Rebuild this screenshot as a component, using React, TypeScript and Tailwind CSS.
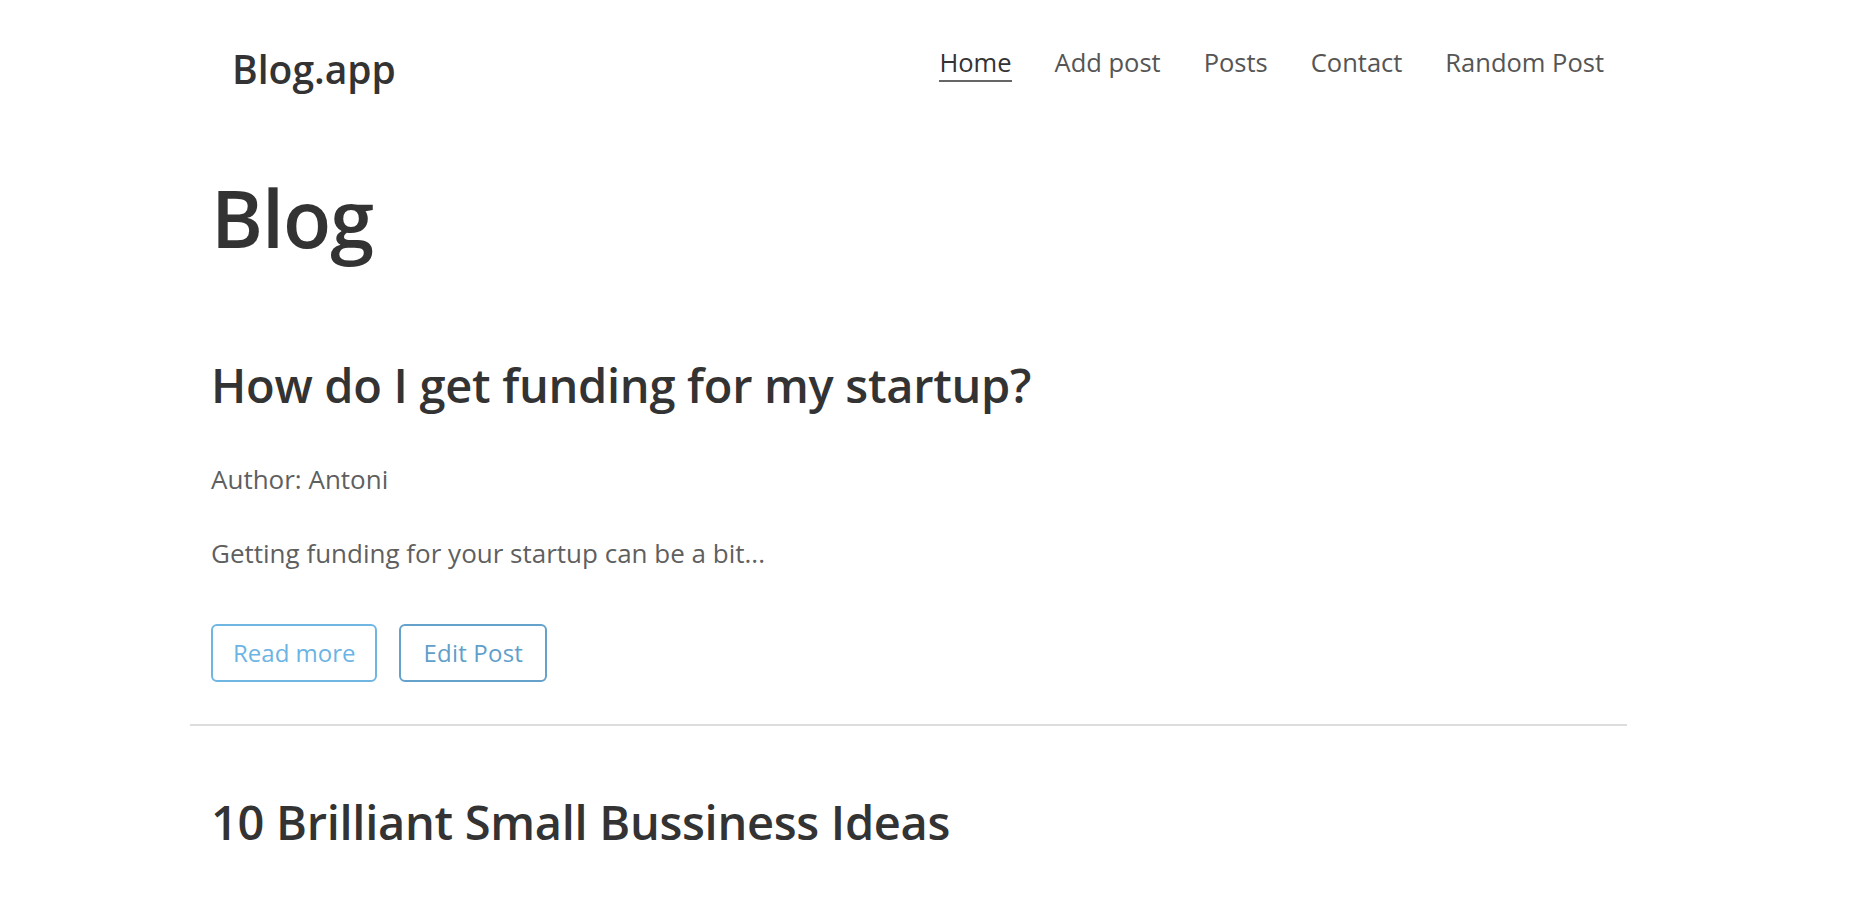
export default function App() {
  const links = ['Home', 'Add post', 'Posts', 'Contact', 'Random Post'];
  return (
    <div className="min-h-screen bg-white text-[#333] font-['Open_Sans',sans-serif]">
      <header className="ml-[190px] w-[1437px] flex justify-between items-start pt-[48px]">
        <a className="ml-[42px] mt-[1px] text-[39px] leading-none font-semibold text-[#333]">Blog.app</a>
        <nav className="flex gap-[43px] mr-[23px] mt-[2px]">
          {links.map((l, i) => (
            <a
              key={l}
              className={
                i === 0
                  ? 'text-[25.5px] leading-none text-[#333] pb-[4px] border-b-2 border-[#666]'
                  : 'text-[25.5px] leading-none text-[#555]'
              }
            >
              {l}
            </a>
          ))}
        </nav>
      </header>
      <main className="ml-[190px] w-[1437px]">
        <h1 className="px-[21px] mt-[90px] text-[79px] leading-none font-semibold tracking-[-1px]">Blog</h1>
        <article className="px-[21px] mt-[105px]">
          <h2 className="text-[47px] leading-none font-semibold tracking-[-0.3px]">How do I get funding for my startup?</h2>
          <p className="mt-[57px] text-[26px] leading-none text-[#5f5f5f]">Author: Antoni</p>
          <p className="mt-[48px] text-[26px] leading-none text-[#5f5f5f]">Getting funding for your startup can be a bit...</p>
          <div className="flex gap-[22px] mt-[58px]">
            <button className="h-[58px] px-[20px] border-2 border-[#70b6e3] rounded-[6px] text-[24px] text-[#6cb4e4]">Read more</button>
            <button className="h-[58px] px-[22px] border-2 border-[#64a2cb] rounded-[6px] text-[24px] tracking-[0.2px] text-[#5f9fca]">Edit Post</button>
          </div>
        </article>
        <hr className="mt-[42px] border-0 h-[2px] bg-[#dddddd]" />
        <article className="px-[21px] mt-[73px]">
          <h2 className="text-[47px] leading-none font-semibold tracking-[-0.3px]">10 Brilliant Small Bussiness Ideas</h2>
        </article>
      </main>
    </div>
  );
}
